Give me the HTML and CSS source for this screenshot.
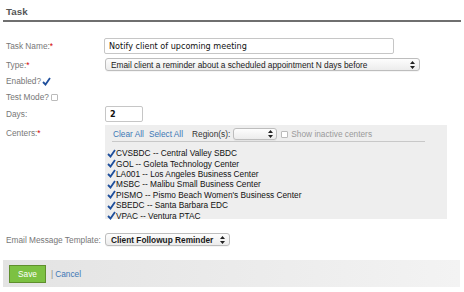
FILE: index.html
```
<!DOCTYPE html>
<html>
<head>
    <title>Task</title>
    <link rel="stylesheet" href="styles.css">
</head>
<body>
    <div class="page">
        <h2 class="title">Task</h2>

        <div class="form">
            <div class="row row-name">
                <label class="label">Task Name:<span class="req">*</span></label>
                <input type="text" class="text-input name-input" value="Notify client of upcoming meeting">
            </div>

            <div class="row row-type">
                <label class="label">Type:<span class="req">*</span></label>
                <div class="select type-select">
                    <span class="select-text">Email client a reminder about a scheduled appointment N days before</span>
                    <svg class="arrows" width="5" height="8" viewBox="0 0 5 8"><path d="M2.5 0 L5 3 H0 Z M2.5 8 L5 5 H0 Z" fill="#222"/></svg>
                </div>
            </div>

            <div class="row row-flag">
                <label class="label-inline">Enabled?</label>
                <svg class="tick" width="9" height="9" viewBox="0 0 9 9"><path d="M1 5 L3.5 7.5 L8 1" fill="none" stroke="#1f4f9c" stroke-width="1.8"/></svg>
            </div>

            <div class="row row-flag row-test">
                <label class="label-inline">Test Mode?</label>
                <span class="box"></span>
            </div>

            <div class="row row-days">
                <label class="label">Days:</label>
                <input type="text" class="text-input days-input" value="2">
            </div>

            <div class="row row-centers">
                <label class="label">Centers:<span class="req">*</span></label>
                <div class="centers">
                    <div class="centers-head">
                        <a class="link" href="#">Clear All</a>
                        <a class="link" href="#">Select All</a>
                        <span class="region-label">Region(s):</span>
                        <div class="select region-select">
                            <span class="select-text"></span>
                            <svg class="arrows" width="5" height="8" viewBox="0 0 5 8"><path d="M2.5 0 L5 3 H0 Z M2.5 8 L5 5 H0 Z" fill="#222"/></svg>
                        </div>
                        <span class="box"></span>
                        <span class="inactive">Show inactive centers</span>
                    </div>
                    <ul class="center-list">
                        <li><svg class="tick" width="9" height="9" viewBox="0 0 9 9"><path d="M1 5 L3.5 7.5 L8 1" fill="none" stroke="#1f4f9c" stroke-width="1.8"/></svg>CVSBDC -- Central Valley SBDC</li>
                        <li><svg class="tick" width="9" height="9" viewBox="0 0 9 9"><path d="M1 5 L3.5 7.5 L8 1" fill="none" stroke="#1f4f9c" stroke-width="1.8"/></svg>GOL -- Goleta Technology Center</li>
                        <li><svg class="tick" width="9" height="9" viewBox="0 0 9 9"><path d="M1 5 L3.5 7.5 L8 1" fill="none" stroke="#1f4f9c" stroke-width="1.8"/></svg>LA001 -- Los Angeles Business Center</li>
                        <li><svg class="tick" width="9" height="9" viewBox="0 0 9 9"><path d="M1 5 L3.5 7.5 L8 1" fill="none" stroke="#1f4f9c" stroke-width="1.8"/></svg>MSBC -- Malibu Small Business Center</li>
                        <li><svg class="tick" width="9" height="9" viewBox="0 0 9 9"><path d="M1 5 L3.5 7.5 L8 1" fill="none" stroke="#1f4f9c" stroke-width="1.8"/></svg>PISMO -- Pismo Beach Women's Business Center</li>
                        <li><svg class="tick" width="9" height="9" viewBox="0 0 9 9"><path d="M1 5 L3.5 7.5 L8 1" fill="none" stroke="#1f4f9c" stroke-width="1.8"/></svg>SBEDC -- Santa Barbara EDC</li>
                        <li><svg class="tick" width="9" height="9" viewBox="0 0 9 9"><path d="M1 5 L3.5 7.5 L8 1" fill="none" stroke="#1f4f9c" stroke-width="1.8"/></svg>VPAC -- Ventura PTAC</li>
                    </ul>
                </div>
            </div>

            <div class="row row-template">
                <label class="label">Email Message Template:</label>
                <div class="select template-select">
                    <span class="select-text">Client Followup Reminder</span>
                    <svg class="arrows" width="5" height="8" viewBox="0 0 5 8"><path d="M2.5 0 L5 3 H0 Z M2.5 8 L5 5 H0 Z" fill="#222"/></svg>
                </div>
            </div>
        </div>

        <div class="footer">
            <button class="save-button">Save</button>
            <span class="sep">|</span>
            <a class="link cancel" href="#">Cancel</a>
        </div>
    </div>
</body>
</html>
```

FILE: styles.css
```
/* Base */
* {
    margin: 0;
    padding: 0;
    box-sizing: border-box;
}

body {
    background: #fff;
    font-family: "Liberation Sans", Arial, sans-serif;
    font-size: 8.3px;
    color: #666;
}

.page {
    width: 464px;
}

.title {
    margin: 0 3px;
    padding: 5px 3px 1px;
    font-size: 9.8px;
    line-height: 14px;
    font-weight: bold;
    color: #555;
    border-bottom: 2px solid #6f6f6f;
}

/* Form rows */
.form {
    padding-left: 6px;
}

.row {
    display: flex;
    align-items: center;
}

.label {
    width: 98px;
    flex: none;
    color: #777;
}

.label-inline {
    color: #777;
}

.req {
    color: #d40000;
}

.row-name {
    margin-top: 16px;
}

.row-type {
    margin-top: 4px;
}

.row-flag {
    height: 14px;
    margin-top: 3px;
}

.row-test {
    margin-top: 2px;
}

.row-days {
    margin-top: 2px;
}

.row-centers {
    margin-top: 3px;
    align-items: flex-start;
}

.row-centers .label {
    padding-top: 3px;
}

.row-template {
    margin-top: 14px;
}

.text-input {
    height: 16px;
    border: 1px solid #c6c6c6;
    border-radius: 2px;
    padding: 0 4px;
    font-family: "DejaVu Sans", Verdana, sans-serif;
    font-size: 8.1px;
    color: #111;
    outline: none;
}

.name-input {
    width: 290px;
}

.days-input {
    width: 38px;
    margin-left: 1px;
    font-weight: bold;
}

/* Fake selects */
.select {
    display: flex;
    align-items: center;
    justify-content: space-between;
    height: 13px;
    padding: 0 4px 0 5px;
    border: 1px solid #bdbdbd;
    border-radius: 3px;
    background: linear-gradient(#fdfdfd, #ececec);
    color: #1a1a1a;
    box-shadow: 0 1px 0 rgba(0, 0, 0, 0.04);
}

.type-select {
    width: 315px;
    margin-left: 1px;
}

.region-select {
    width: 44px;
    height: 12px;
    padding: 0 3px;
    margin-left: 3px;
}

.template-select {
    width: 125px;
    margin-left: 1px;
    font-weight: bold;
}

.arrows {
    flex: none;
}

.tick {
    flex: none;
    margin-left: 1px;
}

.box {
    display: inline-block;
    width: 7px;
    height: 7px;
    margin-left: 2px;
    border: 1px solid #bbb;
    border-radius: 1px;
    background: #fff;
}

.centers-head .box {
    margin-left: 4px;
}

/* Centers box */
.centers {
    width: 342px;
    height: 94px;
    margin-left: 1px;
    padding: 2px 0 0 7px;
    background: #eeeeee;
}

.centers-head {
    display: flex;
    align-items: center;
    width: 313px;
    height: 15px;
    border-bottom: 1px solid #c8c8c8;
    padding-left: 1px;
}

.link {
    color: #3d78b5;
    text-decoration: none;
    margin-right: 5px;
}

.region-label {
    color: #333;
    margin-left: 4px;
}

.inactive {
    color: #9a9a9a;
    margin-left: 3px;
}

.center-list {
    list-style: none;
    margin-top: 6px;
    margin-left: -6px;
}

.center-list li {
    display: flex;
    align-items: center;
    height: 10.4px;
    color: #111;
}

/* Footer */
.footer {
    display: flex;
    align-items: center;
    height: 27px;
    margin: 14px 4px 0 3px;
    padding-left: 6px;
    background: linear-gradient(to right, #e3e3e3, #f3f3f3);
}

.save-button {
    width: 37px;
    height: 18px;
    border: 1px solid #5f8f2d;
    background: #7cc142;
    color: #fff;
    font-family: "Liberation Sans", Arial, sans-serif;
    font-size: 8.3px;
}

.sep {
    margin-left: 5px;
    color: #888;
}

.cancel {
    margin-left: 2px;
}
```
